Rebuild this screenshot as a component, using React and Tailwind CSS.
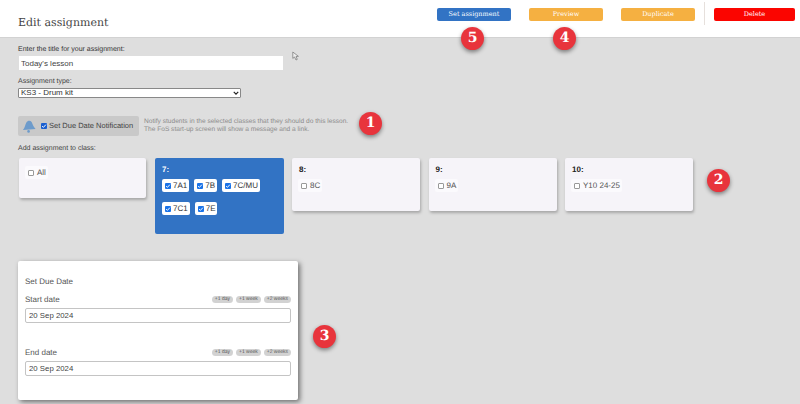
import React from "react";

const sans = "font-['Liberation_Sans',Arial,sans-serif]";
const slab = "font-['DejaVu_Serif',serif]";

const Badge = ({ n, className }) => (
  <div
    className={`absolute w-[23px] h-[23px] rounded-full bg-[#e8343c] text-white flex items-center justify-center text-[14px] font-bold shadow-[0_2px_4px_rgba(0,0,0,0.45)] ${slab} ${className}`}
  >
    {n}
  </div>
);

const HeaderButton = ({ label, className }) => (
  <button className={`h-[13px] rounded-[2px] text-white text-[6.5px] leading-none ${slab} ${className}`}>
    {label}
  </button>
);

const ClassChip = ({ label, checked, dark }) => (
  <label className={`flex items-center h-[13px] pl-[3px] pr-[2px] rounded-[2px] text-[8px] leading-none ${dark ? "gap-[2px] bg-white text-[#333]" : "gap-[3px] bg-[#fbfafd] text-[#555]"}`}>
    <span
      className={`w-[6px] h-[6px] rounded-[1px] flex items-center justify-center ${
        checked ? "bg-[#1a73e8]" : "bg-white border border-[#999]"
      }`}
    >
      {checked && (
        <svg viewBox="0 0 8 8" className="w-[6px] h-[6px]">
          <path d="M1.5 4.2 L3.2 5.8 L6.5 2.2" stroke="white" strokeWidth="1.3" fill="none" />
        </svg>
      )}
    </span>
    {label}
  </label>
);

const YearCard = ({ year, chips }) => (
  <div className="w-[128px] h-[53px] rounded-[2px] bg-[#f6f4f9] shadow-[1px_2px_3px_rgba(0,0,0,0.25)] px-[6px] pt-[7px]">
    <div className="pl-[1px] text-[8px] leading-[9px] font-bold text-[#222]">{year}:</div>
    <div className="flex gap-[4px] mt-[5px]">
      {chips.map((c) => (
        <ClassChip key={c} label={c} />
      ))}
    </div>
  </div>
);

const QuickDates = () => (
  <div className="flex gap-[3px]">
    {["+1 day", "+1 week", "+2 weeks"].map((t) => (
      <span key={t} className="h-[7px] px-[3px] rounded-full bg-[#d2d2d2] text-[5px] leading-[7px] whitespace-nowrap text-[#555]">
        {t}
      </span>
    ))}
  </div>
);

const DateField = ({ label, className }) => (
  <div className={className}>
    <div className="flex items-center justify-between h-[11px]">
      <span className="text-[8px] text-[#555]">{label}</span>
      <QuickDates />
    </div>
    <input
      readOnly
      value="20 Sep 2024"
      className="block w-full h-[15px] mt-[3px] px-[3px] bg-white border border-[#c4c4c4] rounded-[2px] text-[7.8px] text-[#444] outline-none"
    />
  </div>
);

export default function App() {
  return (
    <div className={`relative w-[800px] h-[404px] overflow-hidden bg-[#dedede] [text-rendering:geometricPrecision] ${sans}`}>
      <header className="h-[38px] bg-white border-b border-[#d2d2d2] flex items-start pl-[18px] pr-[5px]">
        <h1 className={`mt-[15px] text-[11px] leading-[15px] text-[#444] ${slab}`}>Edit assignment</h1>
        <div className="ml-auto flex items-start mt-[8px]">
          <HeaderButton label="Set assignment" className="w-[74px] bg-[#3273c4]" />
          <HeaderButton label="Preview" className="w-[74px] ml-[18px] bg-[#f5b041]" />
          <HeaderButton label="Duplicate" className="w-[74px] ml-[18px] bg-[#f5b041]" />
          <div className="w-px h-[23px] -mt-[6px] ml-[9px] bg-[#e6e0dc]" />
          <HeaderButton label="Delete" className="w-[81px] ml-[9px] bg-[#fb0500]" />
        </div>
      </header>

      <main className="pl-[18px]">
        <div className="pt-[8px] text-[7px] leading-[8px] text-[#333]">Enter the title for your assignment:</div>
        <input
          readOnly
          value="Today's lesson"
          className="block w-[264px] h-[14px] ml-[1px] mt-[2px] px-[2px] bg-white text-[8px] text-[#444] outline-none"
        />

        <div className="mt-[8px] text-[7px] leading-[8px] text-[#444]">Assignment type:</div>
        <div className="relative w-[223px] h-[10px] mt-[2px]">
          <select className="block w-full h-full appearance-none p-0 pl-[2px] bg-white border border-[#888] rounded-[1px] text-[8px] leading-[8px] text-[#333]">
            <option>KS3 - Drum kit</option>
          </select>
          <svg viewBox="0 0 8 8" className="absolute right-[2px] top-[2px] w-[6px] h-[6px]">
            <path d="M1 2.5 L4 5.5 L7 2.5" stroke="#222" strokeWidth="1.6" fill="none" />
          </svg>
        </div>

        <div className="flex items-center mt-[18px] h-[20px]">
          <div className="w-[121px] h-full rounded-[2px] bg-[#c9c9c9] flex items-center pl-[4px]">
            <svg viewBox="0 0 16 16" className="w-[14px] h-[14px] shrink-0">
              <path d="M1 12.5 C3.5 10 3.5 6.5 5 4 C6.5 1.5 9.5 1.5 11 3.5 C12.5 6.5 13 9 15.5 11.5 Z" fill="#6d9bcb" />
              <circle cx="7.5" cy="14.2" r="1.5" fill="#6d9bcb" />
            </svg>
            <span className="ml-[5px] w-[6px] h-[6px] rounded-[1px] bg-[#1a5fd0] flex items-center justify-center shrink-0">
              <svg viewBox="0 0 8 8" className="w-[6px] h-[6px]">
                <path d="M1.5 4.2 L3.2 5.8 L6.5 2.2" stroke="white" strokeWidth="1.3" fill="none" />
              </svg>
            </span>
            <span className="ml-[2px] text-[7.5px] leading-none whitespace-nowrap text-[#444]">Set Due Date Notification</span>
          </div>
          <p className="ml-[5px] text-[6.6px] leading-[8px] text-[#8c8c8c]">
            Notify students in the selected classes that they should do this lesson.
            <br />
            The FoS start-up screen will show a message and a link.
          </p>
        </div>

        <div className="mt-[9px] text-[7px] leading-[8px] text-[#444]">Add assignment to class:</div>

        <div className="flex items-start mt-[5px] ml-[1px]">
          <div className="w-[127px] h-[40px] rounded-[2px] bg-[#f6f4f9] shadow-[1px_2px_3px_rgba(0,0,0,0.25)] pl-[6px] pt-[8px]">
            <div className="flex">
              <ClassChip label="All" />
            </div>
          </div>
          <div className="w-[129px] h-[76px] ml-[9px] rounded-[2px] bg-[#3273c4] px-[7px] pt-[7px]">
            <div className="text-[8px] leading-[9px] font-bold text-white">7:</div>
            <div className="flex flex-wrap gap-x-[5px] gap-y-[10px] mt-[5px]">
              {["7A1", "7B", "7C/MU", "7C1", "7E"].map((c) => (
                <ClassChip key={c} label={c} checked dark />
              ))}
            </div>
          </div>
          <div className="flex gap-[8.5px] ml-[8px]">
            <YearCard year="8" chips={["8C"]} />
            <YearCard year="9" chips={["9A"]} />
            <YearCard year="10" chips={["Y10 24-25"]} />
          </div>
        </div>

        <section className="w-[280px] h-[139px] mt-[27px] rounded-[2px] bg-white shadow-[2px_2px_5px_rgba(0,0,0,0.5)] px-[7px] pt-[16px]">
          <div className="text-[8px] leading-[10px] text-[#555]">Set Due Date</div>
          <DateField label="Start date" className="mt-[7px]" />
          <DateField label="End date" className="mt-[24px]" />
        </section>
      </main>

      {/* annotations drawn on top of the screenshot */}
      <svg viewBox="0 0 10 12" className="absolute left-[292px] top-[51px] w-[8px] h-[10px]">
        <path d="M1 1 L1 9 L3.2 7.2 L5 11 L6.6 10.2 L5 6.6 L8 6.4 Z" fill="#eee" stroke="#666" strokeWidth="0.8" />
      </svg>
      <Badge n="1" className="left-[359px] top-[112px]" />
      <Badge n="2" className="left-[707px] top-[169px]" />
      <Badge n="3" className="left-[313px] top-[325px]" />
      <Badge n="4" className="left-[553px] top-[27px]" />
      <Badge n="5" className="left-[461px] top-[27px]" />
    </div>
  );
}
